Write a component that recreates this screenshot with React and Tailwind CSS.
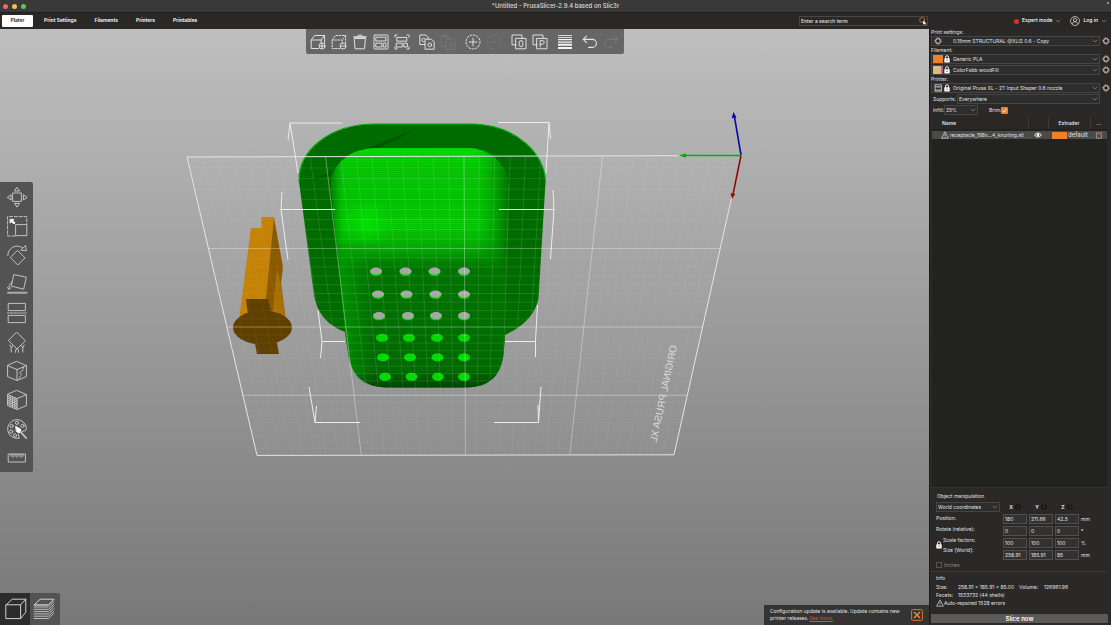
import React from 'react';

const line = {
  fill: 'none',
  stroke: 'currentColor',
  strokeWidth: 0.95,
  strokeLinejoin: 'round',
  strokeLinecap: 'round',
};

function Icon({ className = 'h-4 w-4', box = 16, children }) {
  return (
    <svg viewBox={`0 0 ${box} ${box}`} className={className} {...line} aria-hidden="true">
      {children}
    </svg>
  );
}

const glyphs = {
  add: (
    <>
      <path d="M8.600 14.500H1.200V6h10v2.600M1.200 6 4.600 1.500h10L11.200 6M14.600 1.500v7.500" />
      <circle cx="12" cy="12" r="3" />
      <path d="M12 10.200v3.600M10.200 12h3.600" />
    </>
  ),
  remove: (
    <>
      <path strokeDasharray="1.600 1.500" d="M8.600 14.500H1.200V6h10v2.600M1.200 6 4.600 1.500h10L11.200 6M14.600 1.500v7.500" />
      <circle cx="12" cy="12" r="3" />
      <path d="M10.200 12h3.600" />
    </>
  ),
  trash: (
    <>
      <path d="M2.600 4.500h10.800l-.9 10.300h-9z" />
      <path strokeWidth="1.500" d="M2 3h12" />
      <path d="M5.600 2.600 6.200 1.200h3.600l.6 1.400" />
    </>
  ),
  arrange: (
    <>
      <rect x="1" y="1" width="14" height="14" rx=".8" />
      <rect x="3.200" y="3.200" width="9.600" height="3.800" />
      <rect x="3.200" y="9.200" width="5.600" height="3.800" />
      <rect x="10.600" y="9.200" width="2.400" height="3.800" />
    </>
  ),
  arrangeSel: (
    <>
      <path d="M1 3V1h2M13 1h2v2M15 13v2h-2M3 15H1v-2" />
      <rect x="3.200" y="3.400" width="9.600" height="3.800" />
      <rect x="2.600" y="9.200" width="5.600" height="3.800" />
      <rect x="10.200" y="9.200" width="3.200" height="3.800" />
    </>
  ),
  copy: (
    <>
      <path d="M6 10.500H.8V1h6l2.400 2.400V5" />
      <path d="M6.400 5.200h6l2.800 2.600v7.400H6.400z" />
      <path d="M5.400 4.400A1.800 1.800 0 1 0 5.400 7.600" />
      <circle cx="10.800" cy="10.800" r="1.800" />
    </>
  ),
  paste: (
    <>
      <path d="M6 12.500H1V2.600h8.200V5M3.400 2.600V1.200h3.400v1.400" />
      <path d="M6.400 5.200h6l2.800 2.600v7.400H6.400z" />
      <circle cx="10.800" cy="10.800" r="1.800" />
    </>
  ),
  plus: (
    <>
      <circle cx="8" cy="8" r="7" strokeDasharray="1.800 1.500" />
      <path d="M8 4.200v7.600M4.200 8h7.600" />
    </>
  ),
  minus: (
    <>
      <circle cx="8" cy="8" r="7" strokeDasharray="1.800 1.500" />
      <path d="M4.200 8h7.600" />
    </>
  ),
  splitO: (
    <>
      <path d="M5 10.800H1V1h10v3.400" />
      <rect x="5" y="4.400" width="10" height="10.400" />
      <rect x="8.200" y="6.600" width="3.600" height="6" rx="1.800" />
    </>
  ),
  splitP: (
    <>
      <path d="M5 10.800H1V1h10v3.400" />
      <rect x="5" y="4.400" width="10" height="10.400" />
      <path d="M8.200 12.800V6.600h2.200a1.800 1.800 0 0 1 0 3.600H8.200" />
    </>
  ),
  layers: (
    <g stroke="#f4f4f4" strokeLinecap="butt">
      <path strokeWidth=".8" d="M1 1.500h14M1 3.500h14" />
      <path strokeWidth="1.300" d="M1 5.700h14M1 8.100h14" />
      <path strokeWidth="2" d="M1 10.800h14M1 13.900h14" />
    </g>
  ),
  undo: <path strokeWidth="1.100" d="M4.600 2.200 1.200 5.400l3.400 3.200M1.200 5.400h9.200a4 4 0 0 1 0 8H6.600" />,
  redo: <path strokeWidth="1.100" d="m11.400 2.200 3.400 3.200-3.400 3.200M14.800 5.400H5.600a4 4 0 0 0 0 8h3.800" />,
};

const topGroups = [
  [
    ['add', 'Add'],
    ['remove', 'Delete'],
    ['trash', 'Delete all'],
    ['arrange', 'Arrange'],
    ['arrangeSel', 'Arrange selection'],
  ],
  [
    ['copy', 'Copy'],
    ['paste', 'Paste', true],
  ],
  [
    ['plus', 'Add instance'],
    ['minus', 'Remove instance', true],
  ],
  [
    ['splitO', 'Split to objects'],
    ['splitP', 'Split to parts'],
  ],
  [['layers', 'Variable layer height']],
  [
    ['undo', 'Undo'],
    ['redo', 'Redo', true],
  ],
];

const tools = [
  [
    'Move',
    <>
      <rect x="6" y="6" width="8.400" height="8.400" />
      <path d="M10.200.6 12.600 4H7.800zM10.200 19.800l2.400-3.400H7.800zM.6 10.200 4 7.800v4.800zM19.800 10.200l-3.400-2.400v4.800z" />
    </>,
  ],
  [
    'Scale',
    <>
      <path strokeDasharray="3 1.800" d="M8 20H.6V.6h19.200V8" />
      <rect x="9" y="8.600" width="10.800" height="11" />
      <path fill="#fff" stroke="#fff" d="M3.400 3.400h3.400L5.800 4.600 8 6.800 6.800 8 4.600 5.800 3.400 6.800z" />
    </>,
  ],
  [
    'Rotate',
    <>
      <path d="m10.800 5.600 7.200 7.200-7.200 7.200-7.200-7.200zM.8 10.600C.6 3 9.500-2 15.600 3" />
      <path d="m14.200 5.200 5.200.6-.8-5z" />
    </>,
  ],
  [
    'Place on face',
    <>
      <path d="m7.200.6 12.200 2.600-2.800 12L4.600 12.200z" />
      <path strokeWidth="2" stroke="#aaa" d="M1 18.800h18.600" />
      <path d="M5.600 7.800C2.600 8.800 2 11.200 2 14.600M.6 13.400 2 15.600l1.800-2" />
    </>,
  ],
  [
    'Cut',
    <>
      <rect x="1.600" y=".4" width="16.800" height="7.200" />
      <rect x="1.600" y="12.400" width="16.800" height="7.200" />
      <path strokeDasharray="2 1.200" d="M.4 10h19.200" />
    </>,
  ],
  [
    'Paint-on supports',
    <>
      <path d="m10 .4 8.400 8.400L10 17 1.600 8.800z" />
      <path d="M4.200 20v-4.600L2.800 13M4.200 15.600 6 13.400M15.800 20v-4.600l1.400-2.400M15.800 15.600 14 13.400M8.600 20.400v-2.600l1.400-1 1.400 1v2.600" />
    </>,
  ],
  [
    'Seam painting',
    <>
      <path d="M10 .5 19.400 4.600v11L10 19.500.6 15.600v-11zM.6 4.600 10 8.600l9.400-4M10 8.600v10.900" />
      <path strokeDasharray="1.600 1.200" d="m16.600 6-1.200 4-2.600 1.600 1.600 1.800-2.400 4.400" />
    </>,
  ],
  [
    'Multimaterial painting',
    <>
      <path d="M10 .5 19.400 4.600v11L10 19.500.6 15.600v-11zM.6 4.600 10 8.600l9.400-4M10 8.600v10.900" />
      <path
        strokeWidth=".9"
        d="m.6 6.400 9.400 4M.6 8.200l9.400 4M.6 10l9.400 4M.6 11.800l9.400 4M.6 13.600l9.400 4M3 5.800v10.600M5.400 6.800v10.600M7.800 7.800v10.600"
      />
    </>,
  ],
  [
    'Painting',
    <>
      <path d="M12 19.200A9.400 9.400 0 1 1 19.400 9.600c0 3-3.400 1.800-4.400 3M12 19.200c1-1.400-1.600-2.800-.4-4.400" />
      <circle cx="4.600" cy="7" r="1.600" />
      <circle cx="10" cy="3.800" r="1.600" />
      <circle cx="15.400" cy="6.800" r="1.600" />
      <circle cx="4.200" cy="12.600" r="1.600" />
      <circle cx="8" cy="16.400" r="1.600" />
      <path fill="#fff" stroke="#fff" d="m9 7.600 4.600 2.600.2 2.400-2 1.200-2.200-1.200z" />
      <path strokeWidth="1.800" d="m13.600 13 5.600 6" />
    </>,
  ],
  [
    'Measure',
    <>
      <rect x="1.600" y="6" width="16.800" height="8" />
      <path d="M4 6.400v2M6 6.400v3M8 6.400v2M10 6.400v3M12 6.400v2M14 6.400v3M16 6.400v2" />
    </>,
  ],
];

// Print bed corners and perspective
const bedY = (t) => (157 + 447.3 * t) / (1 + 0.328 * t);
const leftX = (y) => 187 + ((y - 157) / 298) * 70;
const rightX = (y) => 741 - ((y - 155) / 300) * 67;
const steps = Array.from({ length: 35 }, (_, i) => i + 1);
const minorSteps = steps.filter((i) => i % 9 !== 0);
const majorSteps = steps.filter((i) => i % 9 === 0);

const OUTLINE =
  'M375 124H475C518 126 545 155 545.5 182L538.5 298C535 318 518 329 505 335L503.5 355C500 376 490 387 466 387.5H387C362 387 352 374 348.5 355L345 332C329 326 317 314 314 295L299 182C298 150 330 124 375 124Z';

function GridLines({ items, width, opacity }) {
  return (
    <g stroke="#fff" strokeWidth={width} strokeOpacity={opacity}>
      {items.map((i) => {
        const t = i / 36;
        const y = bedY(t);
        return (
          <g key={i}>
            <line x1={187 + 554 * t} y1={156.5} x2={257 + 417 * t} y2={455} />
            <line x1={leftX(y)} y1={y} x2={rightX(y)} y2={y} />
          </g>
        );
      })}
    </g>
  );
}

function BedGrid() {
  return (
    <g>
      <GridLines items={minorSteps} width={0.6} opacity={0.09} />
      <g clipPath="url(#modelClip)">
        <GridLines items={minorSteps} width={0.6} opacity={0.12} />
      </g>
      <GridLines items={majorSteps} width={0.9} opacity={0.38} />
      <path d="M187 157 741 155.500 674 454.800 257 455.400z" fill="none" stroke="#e4e4e4" strokeWidth="1" />
    </g>
  );
}

const holes = [
  [271.5, [376, 405.5, 434.5, 464], true],
  [294.5, [378, 406.5, 435.5, 464], true],
  [316, [379, 408, 436, 464], true],
  [337.5, [382, 409, 437, 464], false],
  [357, [383, 410, 437.5, 464], false],
  [376.5, [385, 411.5, 438, 464], false],
];

function Scene() {
  return (
    <svg
      viewBox="0 29 929 596"
      preserveAspectRatio="xMidYMid slice"
      className="absolute inset-0 h-full w-full"
      role="img"
      aria-label="3D view of the print bed"
    >
      <defs>
        <clipPath id="modelClip">
          <path d={OUTLINE} />
        </clipPath>
        <linearGradient id="body" gradientUnits="userSpaceOnUse" x1="0" y1="148" x2="0" y2="388">
          <stop offset="0" stopColor="#00e400" />
          <stop offset=".08" stopColor="#00cc00" />
          <stop offset=".22" stopColor="#00c800" />
          <stop offset=".32" stopColor="#00d200" />
          <stop offset=".4" stopColor="#00b400" />
          <stop offset=".5" stopColor="#007400" />
          <stop offset=".93" stopColor="#006a00" />
          <stop offset="1" stopColor="#004400" />
        </linearGradient>
        <linearGradient id="sides" gradientUnits="userSpaceOnUse" x1="331" y1="0" x2="510" y2="0">
          <stop offset="0" stopColor="#006c00" stopOpacity=".8" />
          <stop offset=".07" stopColor="#008800" stopOpacity="0" />
          <stop offset=".82" stopColor="#008800" stopOpacity="0" />
          <stop offset=".92" stopColor="#007c00" stopOpacity=".5" />
          <stop offset="1" stopColor="#006c00" />
        </linearGradient>
        <linearGradient id="edge" gradientUnits="userSpaceOnUse" x1="340" y1="0" x2="372" y2="0">
          <stop offset="0" stopColor="#00a000" />
          <stop offset="1" stopColor="#00a000" stopOpacity="0" />
        </linearGradient>
        <radialGradient id="glow" gradientUnits="userSpaceOnUse" cx="367" cy="223" r="24">
          <stop offset="0" stopColor="#00f408" stopOpacity=".6" />
          <stop offset="1" stopColor="#00e800" stopOpacity="0" />
        </radialGradient>
        <pattern id="knurl" width="3" height="2" patternUnits="userSpaceOnUse">
          <path d="M0 .5h3" stroke="#008c00" strokeOpacity=".26" strokeWidth=".7" />
        </pattern>
      </defs>
      <path d="M187 157 741 155 674 455H257z" fill="#fff" fillOpacity=".03" />

      <g stroke="none">
        <path d="M251 228h10.500v-11H274L267 300l-4 16-24 4z" fill="#c48207" />
        <path d="M274 217 283 267 281 283 286 322 262 330 266 299z" fill="#8a5a00" />
        <path d="M277 268 280.500 284 286 322 272 318z" fill="#a87000" />
        <ellipse cx="262.500" cy="327.500" rx="29.500" ry="17" fill="#5f4000" />
        <path d="M246 299h22l4 16h-24zM254 338h22l3 16h-22z" fill="#5f4000" />
      </g>

      <g>
        <path d={OUTLINE} fill="#006c00" />
        <path
          d="M299 182C298 150 330 124 375 124H475C518 126 545 155 545.500 182"
          fill="none"
          stroke="#00b410"
          strokeWidth="1.200"
        />
        <path d="M416 128 396 137 366 149 376 149 398 139z" fill="#005600" />
        <path d="M334 170 306 182 330 176z" fill="#005c00" />
        <path
          d="M375 148H470C494 150 507 166 508.500 188L505 335 503.500 355C500 376 490 387 466 387.500H387C362 387 352 374 348.500 355L345 332 331 185C332 163 350 149 375 148Z"
          fill="url(#body)"
        />
        <path d="M375 148H470C494 150 507 166 508.500 188V250H337L331 185C332 163 350 149 375 148Z" fill="url(#knurl)" />
        <path d="M337 245H372V387C360 385 352 374 348.500 355L345 332z" fill="url(#edge)" opacity=".7" />
        <path d="M375 148H470C494 150 507 166 508.500 188L506 280H340L331 185C332 163 350 149 375 148Z" fill="url(#sides)" />
        <circle cx="367" cy="223" r="24" fill="url(#glow)" />
        {holes.map(([y, xs, open]) =>
          xs.map((x) => (
            <g key={`${x}-${y}`}>
              <ellipse cx={x} cy={y + 0.3} rx="6" ry="4" fill="#00d800" />
              {open && <ellipse cx={x} cy={y - 0.4} rx="6" ry="3.500" fill="#a6a6a6" />}
            </g>
          )),
        )}
      </g>

      <BedGrid />

      <path
        d="M288 140 290 123H342M290 123 298 173M282 192 281 209.500 288 260M281 209.500H335M498 122.500H549L546 173M549 123 550.500 139M499 209.500H554M553 190 554 209.500 550.500 259M318 310 322 341.500H345M322 341.500 320.500 358M505 341.500H535.500M537.500 305 535.500 341V357M309 387 315 422.500H360M315 422.500 316.500 406M541 387 538.500 422.500H494M538.500 422 538 405"
        fill="none"
        stroke="#ececec"
        strokeWidth="1"
      />

      <g strokeWidth="1.600" fill="none">
        <path d="M741 155 734.500 117" stroke="#0a0aa8" />
        <path d="M741 155.500H684" stroke="#0ca80c" />
        <path d="M741 155.500 733 194" stroke="#8c0808" />
      </g>
      <path d="m733.500 112 3 5.500-4.800.8z" fill="#0a0aa8" />
      <path d="m678.500 155.500 7.500-2.200v4.400z" fill="#0ca80c" />
      <path d="m732 199-1.500-6 4.800 1z" fill="#a00a0a" />

      <text
        transform="translate(677 346) rotate(-78) scale(-1 1)"
        className="fill-[#dcdcdc] font-['Liberation_Sans_Narrow','Liberation_Sans',sans-serif] text-[10px]"
      >
        ORIGINAL PRUSA XL
      </text>
    </svg>
  );
}

function Chevron({ className = '' }) {
  return (
    <svg viewBox="0 0 6 4" className={`h-1 w-1.5 ${className}`} fill="none" stroke="#8a8a8a" strokeWidth=".7" aria-hidden="true">
      <path d="m.8.8 2.200 2.200L5.200.8" />
    </svg>
  );
}

function Gear() {
  return (
    <svg viewBox="0 0 8 8" className="h-2 w-2 shrink-0" aria-hidden="true">
      <circle cx="4" cy="4" r="3.100" fill="none" stroke="#e4e4e4" strokeWidth=".8" strokeDasharray="1.100 .8" />
      <circle cx="4" cy="4" r="2.300" fill="#2b1d14" stroke="#e8ddd2" strokeWidth=".9" />
    </svg>
  );
}

function Lock() {
  return (
    <svg viewBox="0 0 6 8" className="h-2 w-1.5 shrink-0" aria-hidden="true">
      <path d="M1.500 3.500V2.200a1.500 1.500 0 0 1 3 0v1.300" fill="none" stroke="#fff" strokeWidth=".9" />
      <rect x=".3" y="3.300" width="5.400" height="4.200" rx=".5" fill="#fff" />
      <path d="M3 4.600v1.400" stroke="#333" strokeWidth=".8" />
    </svg>
  );
}

function Warning() {
  return (
    <svg viewBox="0 0 8 8" className="h-2 w-2 shrink-0" fill="none" stroke="#ddd" strokeWidth=".7" aria-hidden="true">
      <path d="M4 .8 7.400 7.200H.6zM4 3v2.200M4 5.800v.6" />
    </svg>
  );
}

function Cog() {
  return (
    <button type="button" aria-label="Edit preset" className="flex w-[11px] items-center justify-center">
      <Gear />
    </button>
  );
}

function Preset({ label, value, icon }) {
  return (
    <div className="flex h-2.5">
      <div className="relative flex min-w-0 flex-1 items-center border border-[#454545] bg-[#2d2d2d]">
        <div className="flex w-[21px] shrink-0 items-center gap-px pl-px">{icon}</div>
        <select aria-label={label} className="h-full min-w-0 flex-1 appearance-none bg-transparent outline-none">
          <option>{value}</option>
        </select>
        <Chevron className="pointer-events-none absolute right-px" />
      </div>
      <Cog />
    </div>
  );
}

function PlainSelect({ id, label, value, className }) {
  return (
    <div className={`relative flex h-2.5 items-center border border-[#454545] bg-[#2d2d2d] ${className}`}>
      <select id={id} aria-label={label} className="h-full w-full appearance-none bg-transparent pl-px outline-none">
        <option>{value}</option>
      </select>
      <Chevron className="pointer-events-none absolute right-px" />
    </div>
  );
}

const axes = ['X', 'Y', 'Z'];
const rows = [
  ['Position', ['180', '211.66', '42.5'], 'mm'],
  ['Rotate', ['0', '0', '0'], '°'],
  ['Scale', ['100', '100', '100'], '%'],
  ['Size', ['258.91', '185.91', '85'], 'mm'],
];

function Sidebar() {
  return (
    <aside className="flex w-[182px] shrink-0 flex-col border-l border-[#1c1c1c] bg-[#2a2928] pl-px text-[5px] leading-[6px] text-[#e2e2e2]">
      <div className="flex flex-col gap-px">
        <div>Print settings:</div>
        <Preset
          label="Print settings"
          value="0.15mm STRUCTURAL @XLIS 0.6 - Copy"
          icon={
            <span className="pl-px">
              <Gear />
            </span>
          }
        />
        <div>Filament:</div>
        <Preset
          label="Filament 1"
          value="Generic PLA"
          icon={
            <>
              <span className="h-2 w-2.5 bg-[#f08026]" />
              <Lock />
            </>
          }
        />
        <Preset
          label="Filament 2"
          value="ColorFabb woodFill"
          icon={
            <>
              <span className="h-2 w-2.5 border-r-2 border-[#c65a86] bg-[#dcb98a]" />
              <Lock />
            </>
          }
        />
        <div>Printer:</div>
        <Preset
          label="Printer"
          value="Original Prusa XL - 2T Input Shaper 0.6 nozzle"
          icon={
            <>
              <svg viewBox="0 0 10 8" className="h-2 w-2.5" fill="none" stroke="#ddd" strokeWidth=".8" aria-hidden="true">
                <path d="M2 .8h6.400v6.400H2zM2 2.800h6.400M2 6h6.400" />
                <path d="M4 3.400h2" stroke="#f08026" />
              </svg>
              <Lock />
            </>
          }
        />
        <div className="mr-[11px] flex items-center gap-px pl-0.5">
          <label htmlFor="supports" className="whitespace-nowrap">Supports:</label>
          <PlainSelect id="supports" value="Everywhere" className="flex-1" />
        </div>
        <div className="flex items-center pl-0.5">
          <label htmlFor="infill" className="w-[11px] whitespace-nowrap">Infill:</label>
          <PlainSelect id="infill" value="25%" className="w-[34px]" />
          <label htmlFor="brim" className="ml-[11px] w-3">Brim:</label>
          <span className="relative flex">
            <input id="brim" type="checkbox" defaultChecked className="h-[7px] w-[7px] appearance-none rounded-[1px] bg-[#f08026]" />
            <svg viewBox="0 0 7 7" className="pointer-events-none absolute inset-0" fill="none" stroke="#fff" strokeWidth=".8" aria-hidden="true">
              <path d="m1.600 3.600 1.400 1.600 2.400-3.400" />
            </svg>
          </span>
        </div>
      </div>

      <div className="mt-0.5 mr-1 ml-px flex flex-1 flex-col bg-[#222221]">
        <table className="w-full table-fixed border-collapse">
          <colgroup>
            <col />
            <col className="w-5" />
            <col className="w-[42px]" />
            <col className="w-[17px]" />
          </colgroup>
          <thead>
            <tr className="h-3 bg-[#292827]">
              <th className="p-0 pl-2.5 text-left font-semibold">Name</th>
              <th className="border-l border-[#3c3c3c] p-0" />
              <th className="border-l border-[#3c3c3c] p-0 font-semibold">Extruder</th>
              <th className="border-l border-[#3c3c3c] p-0 font-semibold">...</th>
            </tr>
          </thead>
          <tbody>
            <tr className="h-0.5" />
            <tr className="h-2 bg-[#4b4a49]">
              <td className="p-0">
                <div className="flex items-center gap-px pl-[9px] whitespace-nowrap">
                  <Warning />
                  receptacle_198x...4_knurling.stl
                </div>
              </td>
              <td className="p-0">
                <svg viewBox="0 0 8 6" className="mx-auto h-1.5 w-2" fill="none" stroke="#fff" strokeWidth=".9" role="img" aria-label="Visible">
                  <path d="M.6 3C2.200.4 5.800.4 7.400 3 5.800 5.600 2.200 5.600.6 3z" />
                  <circle cx="4" cy="3" r="1" fill="#fff" />
                </svg>
              </td>
              <td className="p-0">
                <div className="flex items-center gap-px pl-1 text-[6px]">
                  <span className="h-[7px] w-[15px] bg-[#f08026]" />
                  default
                </div>
              </td>
              <td className="p-0">
                <svg viewBox="0 0 8 8" className="mx-auto h-2 w-2" fill="none" stroke="#aaa" strokeWidth=".8" role="img" aria-label="Edit">
                  <path d="M5 2H1.400v5.200h5V3.600" />
                  <path d="M4.600 3.600 7.200 1" stroke="#e06a2a" strokeWidth="1.200" />
                </svg>
              </td>
            </tr>
          </tbody>
        </table>
      </div>

      <section className="mr-1 border-t border-[#333] pt-[5px] pl-[5px]">
        <h2 className="pl-px">Object manipulation</h2>
        <div className="mt-[3px] flex">
          <div className="flex w-[67px] flex-col gap-px">
            <PlainSelect label="Coordinate system" value="World coordinates" className="w-16" />
            <div className="h-2.5 leading-[10px]">Position:</div>
            <div className="h-2.5 leading-[10px]">Rotate (relative):</div>
            <div className="flex items-center gap-px">
              <Lock />
              <div>
                <div className="h-2.5 leading-[10px]">Scale factors:</div>
                <div className="h-2.5 leading-[10px]">Size [World]:</div>
              </div>
            </div>
          </div>
          <div className="flex flex-col gap-0.5">
            <div className="flex h-2.5 gap-0.5">
              {axes.map((a) => (
                <div key={a} className="flex w-6 items-center justify-center gap-0.5 font-bold">
                  {a}
                  <svg viewBox="0 0 6 6" className="h-1.5 w-1.5" fill="none" stroke="#0c0c0c" strokeWidth="1" aria-hidden="true">
                    <path d="M2.400 1H1v4h1.400M3.600 1H5v4H3.600" />
                  </svg>
                </div>
              ))}
            </div>
            {rows.map(([name, values, unit]) => (
              <div key={name} className="flex h-2.5 items-center gap-0.5">
                {values.map((v, i) => (
                  <input
                    key={axes[i]}
                    aria-label={`${name} ${axes[i]}`}
                    defaultValue={v}
                    className="h-2.5 w-6 border border-[#505050] bg-[#333231] px-px outline-none"
                  />
                ))}
                <span>{unit}</span>
              </div>
            ))}
          </div>
        </div>
        <div className="mt-0.5 flex items-center gap-0.5 text-[#8c8c8c]">
          <input id="inches" type="checkbox" className="h-1.5 w-1.5 appearance-none border border-[#555]" />
          <label htmlFor="inches">Inches</label>
        </div>
      </section>

      <section className="mt-[3px] mr-1 border-t border-[#3c3c3c] pt-[3px] pl-[5px]">
        <h2>Info</h2>
        <dl className="mt-[3px] flex flex-col gap-0.5">
          <div className="flex">
            <dt className="w-[22px]">Size:</dt>
            <dd className="w-[61px] whitespace-nowrap">258.91 x 185.91 x 85.00</dd>
            <dt className="w-[25px]">Volume:</dt>
            <dd>126961.96</dd>
          </div>
          <div className="flex">
            <dt className="w-[22px]">Facets:</dt>
            <dd>1533732 (44 shells)</dd>
          </div>
        </dl>
        <p className="mt-px flex items-center">
          <Warning />
          Auto-repaired 1528 errors
        </p>
      </section>
      <button type="button" className="mt-[7px] mr-[3px] mb-0.5 h-[9px] rounded-[1px] bg-[#5b5a59] text-[6px] leading-[9px] font-semibold text-white">
        Slice now
      </button>
    </aside>
  );
}

export default function App() {
  return (
    <div className="flex h-screen flex-col overflow-hidden bg-[#2a2928] font-[Inter,'Liberation_Sans',sans-serif] text-white">
      <header className="relative flex h-[13px] shrink-0 items-center justify-center border-b border-[#1f1f1f] bg-[#3a3939]">
        <div className="absolute left-[3px] flex gap-1">
          <span className="h-[5px] w-[5px] rounded-full bg-[#ec6a5e]" />
          <span className="h-[5px] w-[5px] rounded-full bg-[#f4bf4f]" />
          <span className="h-[5px] w-[5px] rounded-full bg-[#61c554]" />
        </div>
        <h1 className="text-[6px] leading-[8px] font-medium text-[#ddd]">*Untitled - PrusaSlicer-2.9.4 based on Slic3r</h1>
        <span className="absolute top-0.5 right-0.5 h-0.5 w-0.5 rounded-full bg-[#f0a030]" />
      </header>

      <nav className="flex h-4 shrink-0 items-center bg-[#292827] pl-0.5 text-[5px] font-semibold">
        <button type="button" className="h-3 w-[31px] rounded-[1px] bg-white text-[#222]">Plater</button>
        <div className="ml-[11px] flex gap-[18px]">
          {['Print Settings', 'Filaments', 'Printers', 'Printables'].map((t) => (
            <button key={t} type="button">{t}</button>
          ))}
        </div>
        <div className="relative ml-auto flex h-2.5 w-[129px] items-center border border-[#474747]">
          <input
            type="text"
            aria-label="Search"
            placeholder="Enter a search term"
            className="h-full w-full bg-transparent pl-px font-medium outline-none placeholder:text-[#e0e0e0]"
          />
          <svg viewBox="0 0 8 8" className="absolute right-0 h-2 w-2" fill="none" aria-hidden="true">
            <circle cx="3.200" cy="3" r="2.500" stroke="#d8693a" strokeWidth=".9" />
            <path d="m4 3.400 3.600 3.200-1.600.1.600 1.200-.7.100-.6-1.200-1 .8z" fill="#fff" />
          </svg>
        </div>
        <div className="flex w-[183px] shrink-0 items-center justify-end pr-1">
          <span className="mr-[3px] h-[5px] w-[5px] rounded-full bg-[#d8321f]" />
          <button type="button" className="flex items-center gap-[3px] font-medium">
            Expert mode
            <Chevron />
          </button>
          <button type="button" className="ml-[9px] flex items-center gap-[3px] font-medium">
            <svg viewBox="0 0 12 12" className="h-2.5 w-2.5" fill="none" stroke="#ddd" strokeWidth=".9" aria-hidden="true">
              <circle cx="6" cy="6" r="5.400" />
              <circle cx="6" cy="4.600" r="2" />
              <path d="M2.600 10c.4-2.400 1.800-3 3.400-3s3 .6 3.400 3" />
            </svg>
            Log in
            <Chevron />
          </button>
        </div>
      </nav>

      <div className="flex min-h-0 flex-1">
        <main className="relative flex min-w-0 flex-1 bg-linear-to-b from-[#bfbfbf] to-[#787878]">
          <Scene />

          <div className="absolute inset-x-0 top-0 flex justify-center">
            <div role="toolbar" aria-label="Plater" className="flex h-[25px] gap-1 rounded-b-[2px] bg-[#666] px-0.5 text-[#e6e6e6]">
              {topGroups.map((group) => (
                <div key={group[0][0]} className="flex">
                  {group.map(([id, label, dim]) => (
                    <button
                      key={id}
                      type="button"
                      aria-label={label}
                      disabled={dim}
                      className="flex w-[21px] items-center justify-center disabled:text-[#777]"
                    >
                      <Icon>{glyphs[id]}</Icon>
                    </button>
                  ))}
                </div>
              ))}
            </div>
          </div>

          <div className="absolute inset-y-0 left-0 flex items-center">
            <div role="toolbar" aria-label="Tools" className="flex w-[33px] flex-col rounded-r-[2px] bg-[#535353] text-[#c8c8c8]">
              {tools.map(([label, art]) => (
                <button key={label} type="button" aria-label={label} className="flex h-[29px] items-center justify-center">
                  <Icon box={20} className="h-5 w-5 overflow-visible">{art}</Icon>
                </button>
              ))}
            </div>
          </div>

          <div className="absolute bottom-0 left-0 flex h-8 overflow-hidden rounded-tr-[2px] bg-[#535353] text-[#d8d8d8]">
            <button type="button" aria-label="3D editor" className="flex w-[30px] items-center justify-end bg-[#2c2c2c] pr-[3px]">
              <Icon box={22} className="h-[22px] w-[22px]">
                <path d="M1.200 6.800h14.400v13.800H1.200zM1.200 6.800 7.200 1.200h13.600l-5.200 5.600M20.800 1.200v13l-5.200 6.400" />
              </Icon>
            </button>
            <button type="button" aria-label="Preview" className="flex w-[30px] items-center justify-center pr-0.5">
              <Icon box={22} className="h-[22px] w-[22px]">
                <path d="M1.200 6.800 7.200 1.200h13.600l-5.200 5.600z" />
                <path
                  strokeWidth="1"
                  stroke="#bcbcbc"
                  d="M1.200 6.800h14.400l5.200-5.200M1.200 9h14.400l5.200-5.200M1.200 11.300h14.400l5.200-5.200M1.200 13.600h14.400l5.200-5.200M1.200 15.900h14.400l5.200-5.200M1.200 18.200h14.400l5.200-5.200M1.200 20.500h14.400l5.200-5.200"
                />
              </Icon>
            </button>
          </div>

          <div role="status" className="absolute right-0 bottom-0 flex h-5 w-[165px] items-center justify-between bg-[#343434] pr-1.5 pl-1.5 font-['Noto_Sans',sans-serif] text-[5px] leading-[7px] text-[#e8e8e8]">
            <p className="whitespace-nowrap">
              Configuration update is available. Update contains new
              <br />
              printer releases. <a href="#releases" className="text-[#d8561c] underline">See more.</a>
            </p>
            <button type="button" aria-label="Close" className="h-3 w-3 shrink-0">
              <svg viewBox="0 0 12 12" className="h-3 w-3" fill="none" stroke="#ed6b21" strokeWidth="1" aria-hidden="true">
                <rect x=".6" y=".6" width="10.800" height="10.800" rx="1" />
                <path d="m3 3 6 6M9 3l-6 6" stroke="#f08a4c" strokeWidth="1.400" />
              </svg>
            </button>
          </div>
        </main>
        <Sidebar />
      </div>
    </div>
  );
}
